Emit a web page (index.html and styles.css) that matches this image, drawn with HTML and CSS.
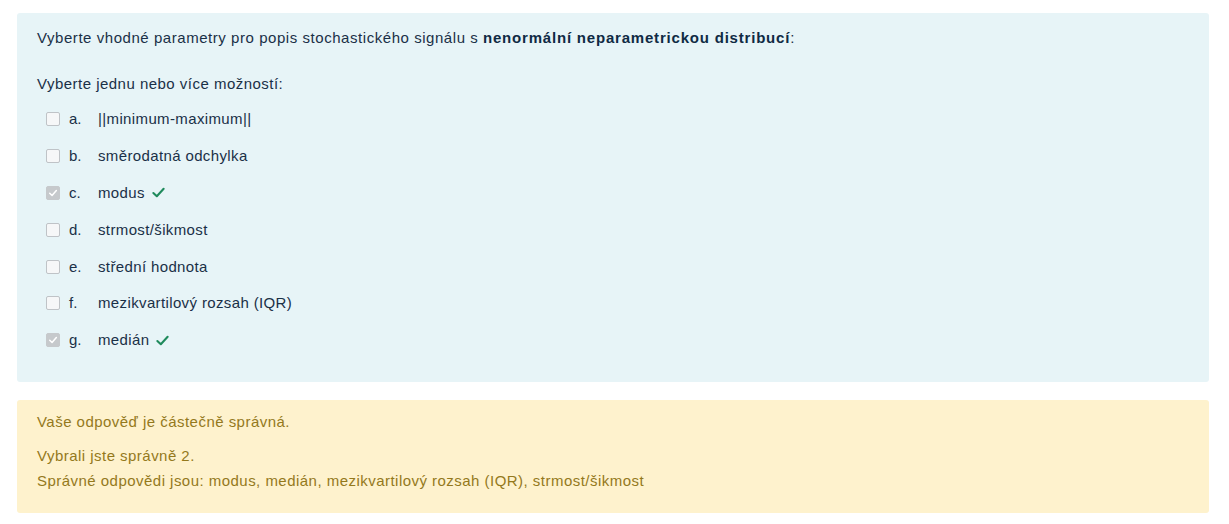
FILE: index.html
```html
<!DOCTYPE html>
<html lang="cs">
<head>
<meta charset="utf-8">
<link rel="stylesheet" href="styles.css">
</head>
<body>
<div class="que">
  <div class="formulation">
    <p class="qtext">Vyberte vhodné parametry pro popis stochastického signálu s <strong>nenormální neparametrickou distribucí</strong>:</p>
    <p class="prompt">Vyberte jednu nebo více možností:</p>
    <div class="answers">
      <div class="opt"><span class="cb"></span><span class="letter">a.</span><span class="txt">||minimum-maximum||</span></div>
      <div class="opt"><span class="cb"></span><span class="letter">b.</span><span class="txt">směrodatná odchylka</span></div>
      <div class="opt"><span class="cb checked"><svg viewBox="0 0 14 14" width="14" height="14"><path d="M3.2 7.3 L5.9 9.9 L10.9 4.2" fill="none" stroke="#fff" stroke-width="1.8" stroke-linecap="round" stroke-linejoin="round"/></svg></span><span class="letter">c.</span><span class="txt">modus</span><svg class="tick" viewBox="0 0 16 16" width="15" height="15"><path d="M2.5 8.5 L6.2 12 L13.5 4" fill="none" stroke="#1f8a5c" stroke-width="2.2" stroke-linecap="round" stroke-linejoin="round"/></svg></div>
      <div class="opt"><span class="cb"></span><span class="letter">d.</span><span class="txt">strmost/šikmost</span></div>
      <div class="opt"><span class="cb"></span><span class="letter">e.</span><span class="txt">střední hodnota</span></div>
      <div class="opt"><span class="cb"></span><span class="letter">f.</span><span class="txt">mezikvartilový rozsah (IQR)</span></div>
      <div class="opt"><span class="cb checked"><svg viewBox="0 0 14 14" width="14" height="14"><path d="M3.2 7.3 L5.9 9.9 L10.9 4.2" fill="none" stroke="#fff" stroke-width="1.8" stroke-linecap="round" stroke-linejoin="round"/></svg></span><span class="letter">g.</span><span class="txt">medián</span><svg class="tick" viewBox="0 0 16 16" width="15" height="15"><path d="M2.5 8.5 L6.2 12 L13.5 4" fill="none" stroke="#1f8a5c" stroke-width="2.2" stroke-linecap="round" stroke-linejoin="round"/></svg></div>
    </div>
  </div>
  <div class="outcome">
    <p class="summary">Vaše odpověď je částečně správná.</p>
    <p class="detail">Vybrali jste správně 2.<br>Správné odpovědi jsou: modus, medián, mezikvartilový rozsah (IQR), strmost/šikmost</p>
  </div>
</div>
</body>
</html>
```

FILE: styles.css
```css
html, body {
  margin: 0;
  padding: 0;
  background: #ffffff;
}
body {
  font-family: "Liberation Sans", Arial, sans-serif;
  font-size: 15px;
  line-height: 22px;
}
.que {
  padding: 13px 20px 0 17px;
  display: flex;
  flex-direction: column;
  gap: 18px;
}
p {
  margin: 0;
}
.formulation {
  background: #e7f4f7;
  color: #1a3047;
  border-radius: 3px;
  padding: 14px 20px 23px 20px;
}
.qtext {
  letter-spacing: 0.55px;
}
.qtext strong {
  font-weight: bold;
  color: #0f2a44;
  letter-spacing: 0.8px;
}
.prompt {
  margin-top: 24px;
  margin-bottom: 6px;
  letter-spacing: 0.48px;
}
.answers {
  display: flex;
  flex-direction: column;
}
.opt {
  display: flex;
  align-items: center;
  height: 36.8px;
  padding-left: 9px;
}
.txt {
  letter-spacing: 0.37px;
}
.cb {
  width: 12px;
  height: 12px;
  border: 1px solid #bfc3c7;
  background: #f6f7f8;
  border-radius: 2px;
  display: flex;
  align-items: center;
  justify-content: center;
  flex: none;
}
.cb.checked {
  background: #c6c9cc;
  border-color: #c6c9cc;
}
.cb svg {
  width: 12px;
  height: 12px;
}
.letter {
  margin-left: 9px;
  width: 29px;
}
.tick {
  margin-left: 6px;
  flex: none;
}
.outcome {
  background: #fef2cd;
  color: #94791c;
  border-radius: 3px;
  padding: 11px 20px 20px 20px;
  letter-spacing: 0.47px;
}
.summary {
  line-height: 22px;
}
.detail {
  margin-top: 10px;
  line-height: 25px;
}
```
